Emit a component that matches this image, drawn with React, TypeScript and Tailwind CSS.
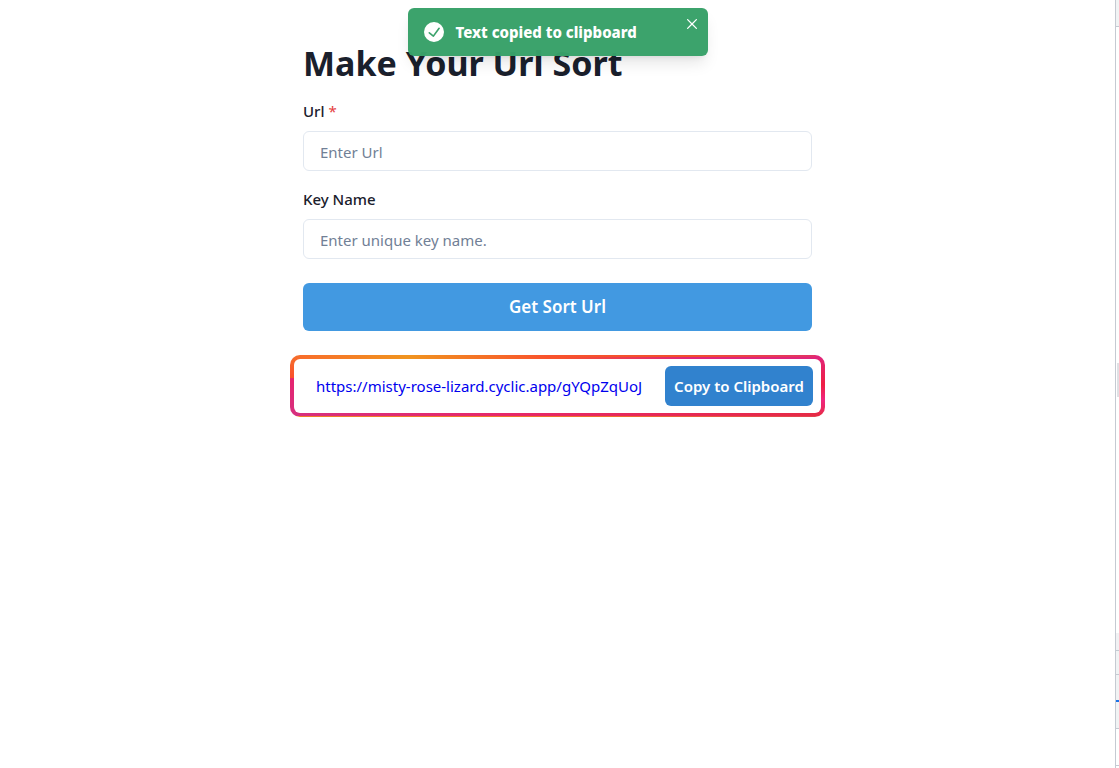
import React, { useState } from "react";

function CheckCircle() {
  return (
    <svg viewBox="0 0 24 24" className="size-5 shrink-0" fill="currentColor" aria-hidden="true">
      <path d="M12,0A12,12,0,1,0,24,12,12.014,12.014,0,0,0,12,0Zm6.927,8.2-6.845,9.289a1.011,1.011,0,0,1-1.43.188L5.764,13.769a1,1,0,1,1,1.25-1.562l4.076,3.261,6.227-8.451A1,1,0,1,1,18.927,8.2Z" />
    </svg>
  );
}

function CloseIcon() {
  return (
    <svg viewBox="0 0 24 24" className="size-[10px]" fill="currentColor" aria-hidden="true">
      <path d="M.439,21.44a1.5,1.5,0,0,0,2.122,2.121L11.823,14.3a.25.25,0,0,1,.354,0l9.262,9.263a1.5,1.5,0,1,0,2.122-2.121L14.3,12.177a.25.25,0,0,1,0-.354l9.263-9.262A1.5,1.5,0,0,0,21.439.44L12.177,9.7a.25.25,0,0,1-.354,0L2.561.44A1.5,1.5,0,0,0,.439,2.561L9.7,11.823a.25.25,0,0,1,0,.354Z" />
    </svg>
  );
}

function Toast({ onClose }: { onClose: () => void }) {
  return (
    <div role="status" className="absolute top-2 left-1/2 flex h-12 w-[300px] -translate-x-1/2 items-center gap-3 rounded-md bg-[#38a169]/98 px-4 text-white shadow-lg">
      <CheckCircle />
      <span className="text-[15px] leading-6 font-extrabold">Text copied to clipboard</span>
      <button type="button" aria-label="Close" onClick={onClose} className="absolute top-1 right-1 flex size-6 items-center justify-center rounded-md">
        <CloseIcon />
      </button>
    </div>
  );
}

function Field({ id, label, placeholder, required }: { id: string; label: string; placeholder: string; required?: boolean }) {
  return (
    <div>
      <label htmlFor={id} className="block text-[15px] leading-6 font-medium">
        {label} {required && <span className="font-normal text-[#e53e3e]">*</span>}
      </label>
      <input
        id={id}
        type="text"
        placeholder={placeholder}
        className="mt-2 block h-10 w-full rounded-md border border-[#e2e8f0] px-4 pt-0.5 text-[15px] placeholder:text-[#718096]"
      />
    </div>
  );
}

function SidePanelEdge() {
  return (
    <aside className="flex w-1 shrink-0 flex-col border-l border-[#c5cad2]">
      <div className="h-[27px] border-b border-[#c5cad2] bg-[#f1f3f4]" />
      <div className="flex flex-1 flex-col justify-center">
        <div className="mt-[100px] ml-px h-[34px] bg-[#e0e0e4]" />
      </div>
      <div className="h-[18px] border-b border-[#c5cad2] bg-[#f1f1f3]" />
      <div className="h-6 border-b border-[#c5cad2] bg-[#f1f3f4]" />
      <div className="h-[25px] bg-[#f1f3f4]" />
      <div className="h-0.5 bg-[#1a73e8]" />
      <div className="h-[27px] border-b border-[#c5cad2] bg-[#f1f3f4]" />
      <div className="h-[37px] border-b border-[#c5cad2]" />
      <div className="h-0.5" />
    </aside>
  );
}

export default function App() {
  const [toastOpen, setToastOpen] = useState(true);
  const url = "https://misty-rose-lizard.cyclic.app/gYQpZqUoJ";

  return (
    <div className="flex min-h-screen bg-white font-['Noto_Sans','Segoe_UI',sans-serif] text-base text-[#1a202c]">
      <main className="relative min-w-0 flex-1">
        <div className="mx-auto w-full max-w-[509px] pt-[39px]">
          <h1 className="text-[34px] leading-12 font-bold">Make Your Url Sort</h1>
          <form className="mt-3 flex flex-col gap-4">
            <Field id="url" label="Url" placeholder="Enter Url" required />
            <Field id="key" label="Key Name" placeholder="Enter unique key name." />
            <button type="button" className="mt-2 h-12 w-full rounded-md bg-[#4299e1] text-[17px] font-semibold text-white">
              Get Sort Url
            </button>
          </form>
          <div className="-mx-[13px] mt-6 rounded-[10px] [background:linear-gradient(90deg,#f08028,#f0702c_60%,#e04050)_0_100%/100%_1px_no-repeat,linear-gradient(90deg,#d6307f,#e6286a_40%,#e62a45)_0_100%/100%_4px_no-repeat,linear-gradient(90deg,#e0247a00_50%,#e0247a_75%)_0_2px/100%_2px_no-repeat,linear-gradient(180deg,#f5702c,#fa502c_37%,#e6246f_38%,#d6307f)_0_0/10px_100%_no-repeat,linear-gradient(180deg,#e0247a,#ef1f44_48%,#f0267f_72%,#e62a45)_100%_0/10px_100%_no-repeat,linear-gradient(90deg,#f96a2c,#f0941f_22%,#f9532c_48%,#f0502c_75%,#e0306a)] p-1">
            <div className="flex items-center justify-between rounded-md bg-white py-[7px] pr-2 pl-[22px]">
              <a href={url} className="text-[15px] text-[#0000ee]">{url}</a>
              <button type="button" onClick={() => setToastOpen(true)} className="h-10 w-[148px] rounded-md bg-[#3182ce] text-[15px] font-semibold text-white">
                Copy to Clipboard
              </button>
            </div>
          </div>
        </div>
        {toastOpen && <Toast onClose={() => setToastOpen(false)} />}
      </main>
      <SidePanelEdge />
    </div>
  );
}
